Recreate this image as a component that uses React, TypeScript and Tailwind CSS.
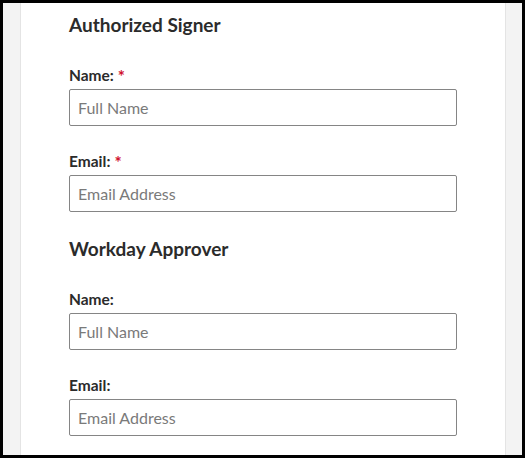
import React from "react";

interface Field {
  id: string;
  label: string;
  placeholder: string;
  required: boolean;
}

interface Section {
  title: string;
  fields: Field[];
}

const sections: Section[] = [
  {
    title: "Authorized Signer",
    fields: [
      { id: "signer-name", label: "Name:", placeholder: "Full Name", required: true },
      { id: "signer-email", label: "Email:", placeholder: "Email Address", required: true },
    ],
  },
  {
    title: "Workday Approver",
    fields: [
      { id: "approver-name", label: "Name:", placeholder: "Full Name", required: false },
      { id: "approver-email", label: "Email:", placeholder: "Email Address", required: false },
    ],
  },
];

export default function App() {
  return (
    <div
      className="flex w-[525px] h-[458px] overflow-hidden border-[3px] border-black bg-[#f3f3f3] text-[#2b2b2b]"
      style={{ fontFamily: "Lato, 'Open Sans', sans-serif" }}
    >
      {/* gutters + white form panel */}
      <div className="w-[17px] shrink-0" />
      <div className="w-[486px] shrink-0 bg-white border-x border-[#e4e4e4] pl-[48px] pt-[9px]">
        {sections.map((section) => (
          <section key={section.title} className="mb-[24px]">
            <h2 className="text-[19px] leading-[24px] font-bold pt-[1px] mb-[29px]">{section.title}</h2>
            <div className="space-y-[26px]">
              {section.fields.map((field) => (
                <div key={field.id}>
                  <label htmlFor={field.id} className="block h-[18px] text-[15.5px] leading-[18px] font-bold mb-[5px]">
                    {field.label}
                    {field.required && <span className="ml-1 text-[17px] leading-none align-[-2px] text-[#d0102e]">*</span>}
                  </label>
                  <input
                    id={field.id}
                    type="text"
                    placeholder={field.placeholder}
                    className="block w-[388px] h-[37px] px-[8px] rounded-[2px] border border-[#858585] text-[16px] placeholder:text-[#7a7a7a] outline-none"
                  />
                </div>
              ))}
            </div>
          </section>
        ))}
      </div>
      <div className="flex-1" />
    </div>
  );
}
